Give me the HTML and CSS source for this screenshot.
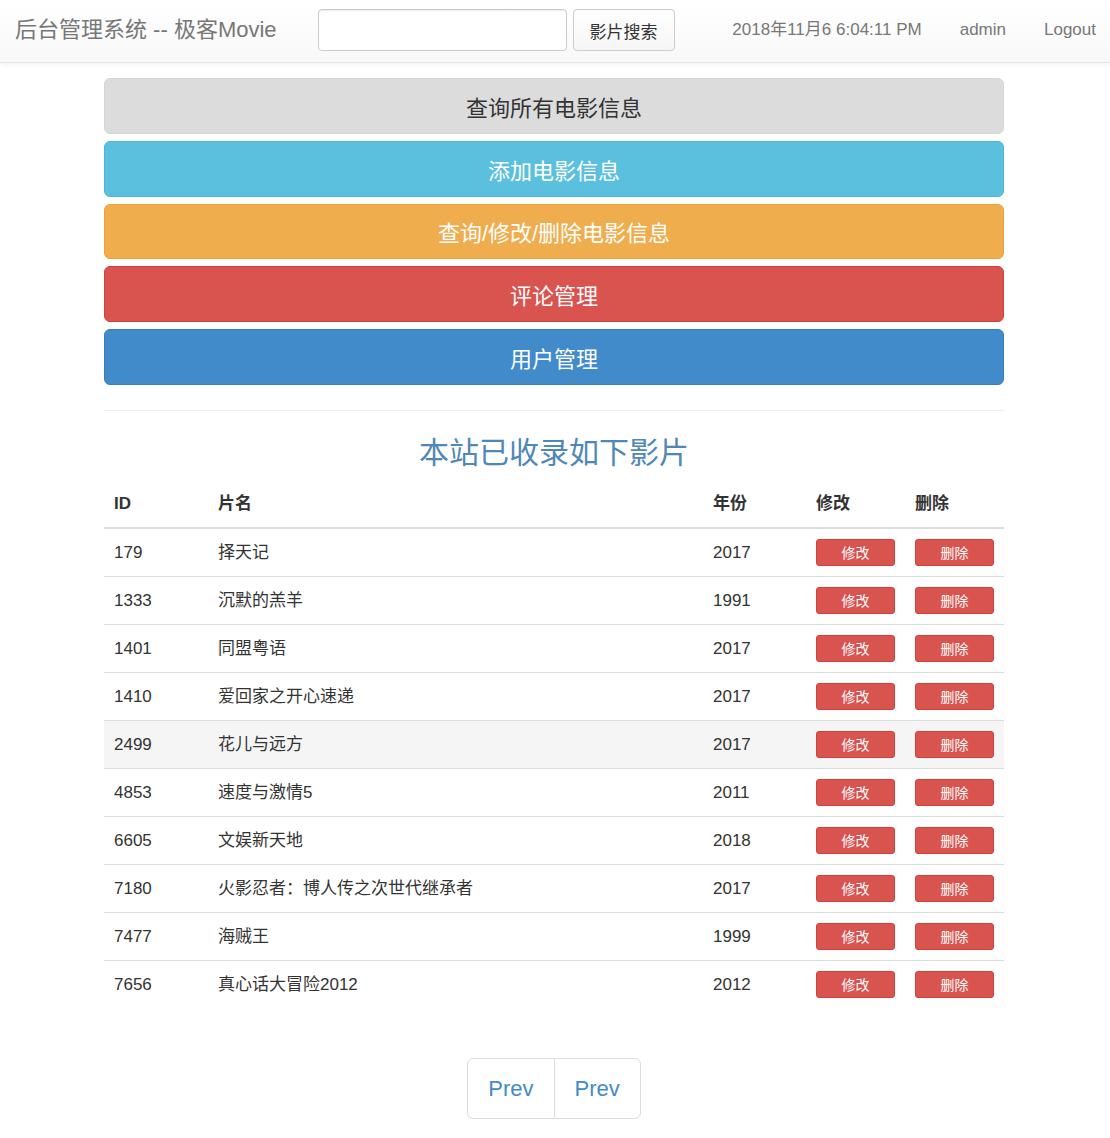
FILE: index.html
```html
<!DOCTYPE html>
<html lang="zh-CN">
<head>
<meta charset="utf-8">
<title>后台管理系统 -- 极客Movie</title>
<link rel="stylesheet" href="styles.css">
</head>
<body>
<nav class="navbar">
  <a class="brand" href="#">后台管理系统 -- 极客Movie</a>
  <form class="search">
    <input class="search-input" type="text">
    <button class="search-btn" type="button">影片搜索</button>
  </form>
  <ul class="nav-right">
    <li>2018年11月6 6:04:11 PM</li>
    <li><a href="#">admin</a></li>
    <li><a href="#">Logout</a></li>
  </ul>
</nav>

<main class="container">
  <div class="actions">
    <a class="big-btn btn-default" href="#">查询所有电影信息</a>
    <a class="big-btn btn-info" href="#">添加电影信息</a>
    <a class="big-btn btn-warning" href="#">查询/修改/删除电影信息</a>
    <a class="big-btn btn-danger" href="#">评论管理</a>
    <a class="big-btn btn-primary" href="#">用户管理</a>
  </div>

  <hr class="divider">

  <h2 class="title">本站已收录如下影片</h2>

  <table class="movies">
    <colgroup>
      <col class="c-id"><col class="c-name"><col class="c-year"><col class="c-edit"><col class="c-del">
    </colgroup>
    <thead>
      <tr><th>ID</th><th>片名</th><th>年份</th><th>修改</th><th>删除</th></tr>
    </thead>
    <tbody>
      <tr><td>179</td><td>择天记</td><td>2017</td><td><button class="sm-btn">修改</button></td><td><button class="sm-btn">删除</button></td></tr>
      <tr><td>1333</td><td>沉默的羔羊</td><td>1991</td><td><button class="sm-btn">修改</button></td><td><button class="sm-btn">删除</button></td></tr>
      <tr><td>1401</td><td>同盟粤语</td><td>2017</td><td><button class="sm-btn">修改</button></td><td><button class="sm-btn">删除</button></td></tr>
      <tr><td>1410</td><td>爱回家之开心速递</td><td>2017</td><td><button class="sm-btn">修改</button></td><td><button class="sm-btn">删除</button></td></tr>
      <tr class="hover"><td>2499</td><td>花儿与远方</td><td>2017</td><td><button class="sm-btn">修改</button></td><td><button class="sm-btn">删除</button></td></tr>
      <tr><td>4853</td><td>速度与激情5</td><td>2011</td><td><button class="sm-btn">修改</button></td><td><button class="sm-btn">删除</button></td></tr>
      <tr><td>6605</td><td>文娱新天地</td><td>2018</td><td><button class="sm-btn">修改</button></td><td><button class="sm-btn">删除</button></td></tr>
      <tr><td>7180</td><td>火影忍者：博人传之次世代继承者</td><td>2017</td><td><button class="sm-btn">修改</button></td><td><button class="sm-btn">删除</button></td></tr>
      <tr><td>7477</td><td>海贼王</td><td>1999</td><td><button class="sm-btn">修改</button></td><td><button class="sm-btn">删除</button></td></tr>
      <tr><td>7656</td><td>真心话大冒险2012</td><td>2012</td><td><button class="sm-btn">修改</button></td><td><button class="sm-btn">删除</button></td></tr>
    </tbody>
  </table>

  <ul class="pager">
    <li><a href="#">Prev</a></li>
    <li><a href="#">Prev</a></li>
  </ul>
</main>
</body>
</html>
```

FILE: styles.css
```css
* { box-sizing: border-box; }

body {
  margin: 0;
  font-family: "Liberation Sans", "Noto Sans CJK SC", sans-serif;
  font-size: 17px;
  color: #333;
  background: #fff;
}

a { text-decoration: none; }

.navbar {
  display: flex;
  align-items: center;
  height: 63px;
  padding-bottom: 2px;
  line-height: 22px;
  background: linear-gradient(to bottom, #ffffff 0%, #f8f8f8 100%);
  border-bottom: 1px solid #e7e7e7;
  box-shadow: 0 1px 5px rgba(0, 0, 0, 0.075);
}

.brand {
  padding-left: 15px;
  font-size: 22px;
  color: #777;
  white-space: nowrap;
}

.search {
  display: flex;
  margin: 0 0 0 41px;
  gap: 6px;
}

.search-input {
  width: 249px;
  height: 42px;
  border: 1px solid #ccc;
  border-radius: 4px;
  box-shadow: inset 0 1px 1px rgba(0, 0, 0, 0.075);
  background: #fff;
}

.search-btn {
  width: 102px;
  height: 42px;
  border: 1px solid #ccc;
  border-radius: 4px;
  background: linear-gradient(to bottom, #fff 0%, #f6f6f6 100%);
  color: #333;
  font-family: "Liberation Sans", "Noto Sans CJK SC", sans-serif;
  font-size: 17px;
}

.nav-right {
  display: flex;
  align-items: center;
  margin: 0 0 0 auto;
  padding: 0;
  list-style: none;
  color: #777;
  white-space: nowrap;
}

.nav-right li { padding: 0 19px; }
.nav-right li:last-child { padding-right: 14px; }
.nav-right a { color: #777; }

.container {
  width: 900px;
  margin: 0 auto 0 104px;
}

.actions {
  display: flex;
  flex-direction: column;
  gap: 7px;
  margin-top: 15px;
}

.big-btn {
  display: flex;
  align-items: center;
  justify-content: center;
  height: 55.8px;
  border: 1px solid transparent;
  border-radius: 6px;
  font-size: 22px;
  color: #fff;
}

.btn-default { background: #dcdcdc; border-color: #d6d6d6; color: #333; }
.btn-info { background: #5bc0de; border-color: #46b8da; }
.btn-warning { background: #f0ad4e; border-color: #eea236; }
.btn-danger { background: #d9534f; border-color: #d43f3a; }
.btn-primary { background: #428bca; border-color: #357ebd; }

.divider {
  margin: 25px 0 0;
  border: 0;
  border-top: 1px solid #eee;
}

.title {
  margin: 25px 0 11px;
  text-align: center;
  font-weight: 400;
  font-size: 30px;
  line-height: 33px;
  color: #4f88b6;
}

.movies {
  width: 100%;
  table-layout: fixed;
  border-collapse: collapse;
}

.c-id { width: 104px; }
.c-name { width: 495px; }
.c-year { width: 103px; }
.c-edit { width: 99px; }
.c-del { width: 99px; }

.movies th {
  text-align: left;
  font-weight: 700;
  padding: 13px 10px;
  line-height: 21px;
  border-bottom: 2px solid #ddd;
}

.movies td {
  padding: 10px;
  line-height: 27px;
  border-top: 1px solid #ddd;
  vertical-align: middle;
}

.movies tbody tr:first-child td { border-top: 0; }

.movies tr.hover td { background: #f5f5f5; }

.sm-btn {
  display: block;
  width: 100%;
  height: 27px;
  padding: 0;
  border: 1px solid #d43f3a;
  border-radius: 3px;
  background: #d9534f;
  color: #fff;
  font-family: "Liberation Sans", "Noto Sans CJK SC", sans-serif;
  font-size: 14px;
}

.pager {
  display: flex;
  justify-content: center;
  margin: 50px 0 0;
  padding: 0;
  list-style: none;
}

.pager li a {
  display: block;
  padding: 14px 20px;
  font-size: 22px;
  line-height: 31px;
  color: #428bca;
  border: 1px solid #ddd;
  background: #fff;
}

.pager li:first-child a { border-radius: 6px 0 0 6px; }
.pager li:last-child a { border-radius: 0 6px 6px 0; margin-left: -1px; }
```
